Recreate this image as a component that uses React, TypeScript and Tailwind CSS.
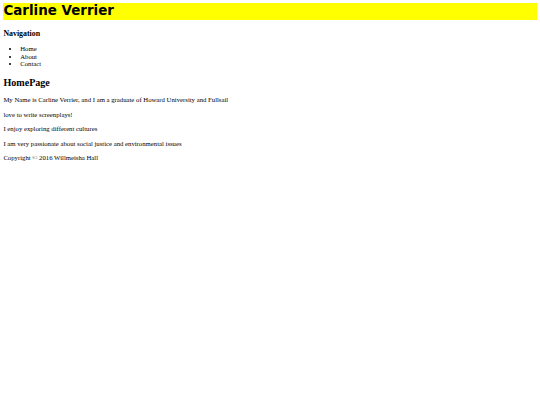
const navLinks = ["Home", "About", "Contact"];

const paragraphs = [
  "My Name is Carline Verrier, and I am a graduate of Howard University and Fullsail",
  "love to write screenplays!",
  "I enjoy exploring different cultures",
  "I am very passionate about social justice and environmental issues",
];

export default function App() {
  return (
    <div className="min-h-screen bg-white px-[3.4px] pt-[3px] font-['Liberation_Serif',serif] text-[6.72px] leading-[8px] text-black">
      <header className="bg-[#ffff00]">
        <h1 className="font-['DejaVu_Sans',sans-serif] text-[13.44px] leading-[16.5px] font-bold">
          Carline Verrier
        </h1>
      </header>
      <nav className="mt-[9px]">
        <h3 className="text-[7.86px] leading-[9px] font-bold">Navigation</h3>
        <ul className="mt-[7.75px] list-disc pl-[16.8px] leading-[7.5px]">
          {navLinks.map((link) => (
            <li key={link}>{link}</li>
          ))}
        </ul>
      </nav>
      <main className="mt-[9.25px]">
        <h2 className="text-[10.08px] leading-[12px] font-bold">HomePage</h2>
        <div className="mt-[7.2px] flex flex-col gap-[6.5px]">
          {paragraphs.map((text) => (
            <p key={text}>{text}</p>
          ))}
          <footer>
            <p>Copyright © 2016 Willmeisha Hall</p>
          </footer>
        </div>
      </main>
    </div>
  );
}
